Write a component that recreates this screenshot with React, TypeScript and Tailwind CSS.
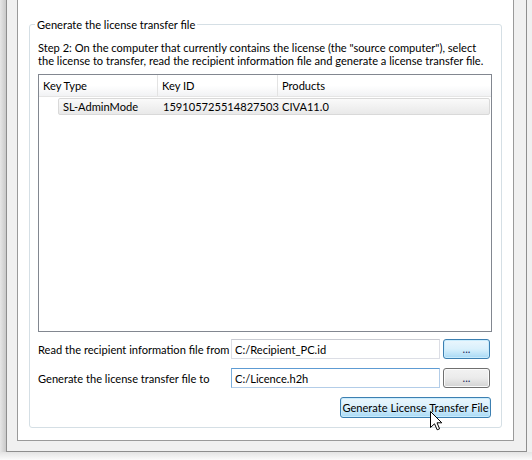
import React from "react";

const font = { fontFamily: '"Lato", "Noto Sans", sans-serif' };

const Cursor: React.FC = () => (
  <svg
    className="absolute left-[430px] top-[411px]"
    width="13"
    height="20"
    viewBox="0 0 13 20"
  >
    <path
      d="M0.5 0.5 L0.5 16.5 L4.5 12.8 L7.2 18.8 L9.6 17.8 L7 11.8 L11.8 11.8 Z"
      fill="white"
      stroke="black"
      strokeWidth="1"
      strokeLinejoin="miter"
    />
  </svg>
);

const App: React.FC = () => {
  return (
    <div
      className="relative w-[532px] h-[460px] bg-[#f0f0f0] text-[11.1px] leading-[13px] text-black overflow-hidden whitespace-nowrap"
      style={font}
    >
      <div className="flex h-[452px]">
        <div className="w-[6px] bg-gradient-to-r from-[#e6e6e6] to-[#c9c9c9]" />

        {/* outer frame */}
        <div className="w-[521px] border-x border-b border-[#8e8e8e] pl-[10px] pr-[12px] pb-[10px]">
          {/* inner frame */}
          <div className="h-[441px] border-x border-b border-[#9a9a9a] bg-white px-[11px] pt-[24px] pb-[12px]">
            {/* group box */}
            <div className="relative h-full rounded-[3px] border border-[#d5dfe5] pl-[8px] pr-[9px] pt-[16px] pb-[9px] flex flex-col">
              <span className="absolute left-[5px] -top-[8px] bg-white px-[2px] leading-[16px]">
                Generate the license transfer file
              </span>

              <p className="h-[26px]">
                Step 2: On the computer that currently contains the license (the "source computer"), select
                <br />
                the license to transfer, read the recipient information file and generate a license transfer file.
              </p>

              {/* table */}
              <div className="mt-[7px] h-[258px] border border-[#828790] flex flex-col">
                <div className="flex h-[22px] border-b border-[#e5e5e5] bg-gradient-to-b from-white via-white to-[#f1f2f4]">
                  <div className="w-[119px] pl-[4px] flex items-center border-r border-[#e3e3e3]">Key Type</div>
                  <div className="w-[120px] pl-[4px] flex items-center border-r border-[#e3e3e3]">Key ID</div>
                  <div className="flex-1 pl-[4px] flex items-center">Products</div>
                </div>
                <div className="mt-[1px] ml-[19px] mr-[1px] h-[17px] flex items-center rounded-[2px] border border-[#d9d9d9] bg-gradient-to-b from-[#fafafa] to-[#e9e9e9]">
                  <div className="w-[99px] pl-[4px]">SL-AdminMode</div>
                  <div className="w-[120px] pl-[5px]">159105725514827503</div>
                  <div className="flex-1 pl-[4px]">CIVA11.0</div>
                </div>
              </div>

              {/* file rows */}
              <div className="mt-[7px] flex items-center h-[20px]">
                <span className="w-[193px]">Read the recipient information file from</span>
                <div className="w-[209px] h-[20px] border border-[#dcdee5] border-t-[#c9cbd2] flex items-center pl-[3px]">
                  C:/Recipient_PC.id
                </div>
                <button className="ml-[3px] w-[47px] h-[20px] rounded-[3px] border border-[#3c7fb1] bg-gradient-to-b from-[#eaf6fd] via-[#d9f0fc] to-[#a7d9f5] text-[#1e2a5a] leading-[14px] shadow-[inset_0_0_0_1px_#c9ecfd]">
                  ...
                </button>
              </div>
              <div className="mt-[9px] flex items-center h-[20px]">
                <span className="w-[193px]">Generate the license transfer file to</span>
                <div className="w-[209px] h-[20px] border border-[#b3cde8] border-t-[#5d9bd3] border-l-[#7aaedc] flex items-center pl-[3px]">
                  C:/Licence.h2h
                </div>
                <button className="ml-[3px] w-[47px] h-[20px] rounded-[3px] border border-[#707070] bg-gradient-to-b from-[#f2f2f2] via-[#ebebeb] to-[#d3d3d3] text-[#1e2a5a] leading-[14px] shadow-[inset_0_0_0_1px_#fbfbfb]">
                  ...
                </button>
              </div>
              <div className="mt-[9px] flex justify-end pr-[1px]">
                <button className="w-[151px] h-[21px] rounded-[3px] border border-[#3c7fb1] bg-gradient-to-b from-[#eaf6fd] via-[#d9f0fc] to-[#a7d9f5] leading-[14px] shadow-[inset_0_0_0_1px_#c9ecfd]">
                  Generate License Transfer File
                </button>
              </div>
            </div>
          </div>
        </div>

        <div className="flex-1" />
      </div>
      <div className="h-[8px] bg-gradient-to-b from-[#e4e4e4] to-[#fbfbfb]" />

      <Cursor />
    </div>
  );
};

export default App;
